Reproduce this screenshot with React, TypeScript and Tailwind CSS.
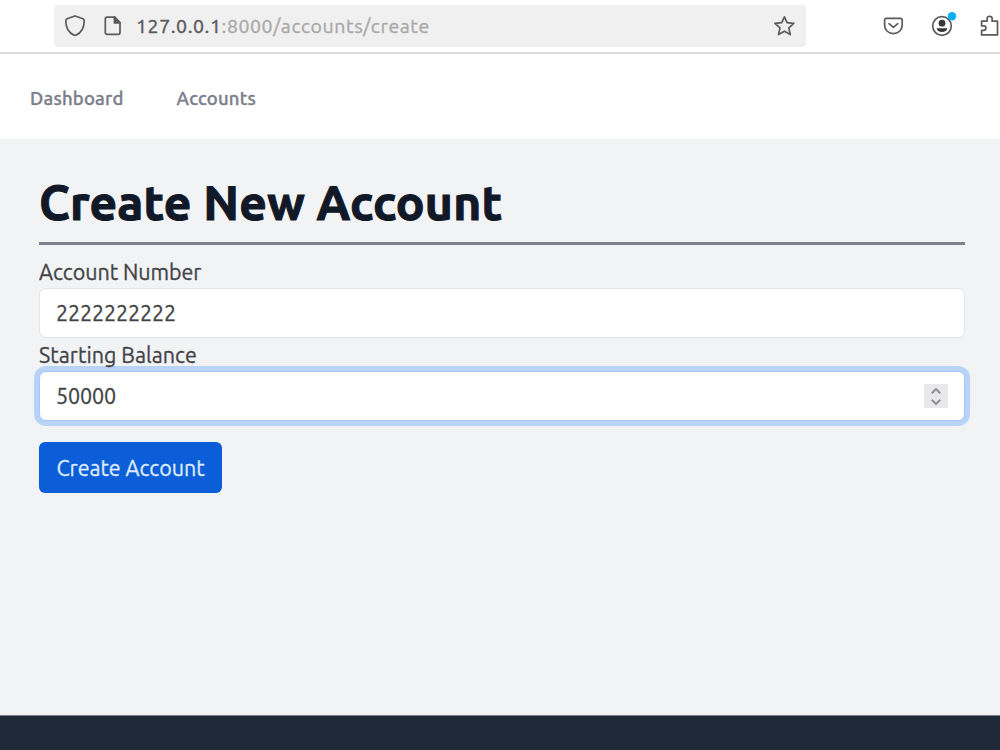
import { useState, type ReactNode } from 'react';

const FONT = "font-['Ubuntu','Noto_Sans',sans-serif]";
const LABEL_TEXT = 'text-[21.5px] text-[#424347] [-webkit-text-stroke:0.3px_#424347]';
const FIELD_TEXT = 'text-[21.5px] tracking-[-0.13px] text-[#424347] [-webkit-text-stroke:0.3px_#424347]';

const NAV_LINKS = [
  { label: 'Dashboard', href: '#dashboard' },
  { label: 'Accounts',  href: '#accounts'  },
];

function ToolbarIcon({ children }: { children: ReactNode }) {
  return (
    <svg
      viewBox="0 0 24 24"
      className="h-6 w-6 flex-shrink-0 overflow-visible"
      fill="none"
      stroke="#5b5b5d"
      strokeWidth="1.7"
      strokeLinecap="round"
      strokeLinejoin="round"
    >
      {children}
    </svg>
  );
}

function BrowserBar() {
  return (
    <div className="flex h-[54px] items-start overflow-hidden border-b-2 border-[#dcdcdc] bg-white pt-[5px] pl-[54px]">
      <div className="flex h-[42px] w-[752px] flex-shrink-0 items-center rounded-[4px] bg-[#f0f0f0] px-[9px]">
        {/* Shield */}
        <ToolbarIcon>
          <path d="M11.1 2.2Q12 1.7 12.9 2.2L19.9 4.7Q21.2 5.2 21.2 6.7C21.2 13.5 18 18.9 13 21.1Q12 21.6 11 21.1C6 18.9 2.8 13.5 2.8 6.7Q2.8 5.2 4.1 4.7Z" />
        </ToolbarIcon>
        {/* Page */}
        <div className="ml-[14px] flex">
          <ToolbarIcon>
            <path d="M6.1 3.2H13.8L19 8.6V18.6Q19 20.4 17.2 20.4H6.1Q4.3 20.4 4.3 18.6V5Q4.3 3.2 6.1 3.2Z" />
            <path d="M13.4 3.2V8.8H19Z" fill="#5b5b5d" />
          </ToolbarIcon>
        </div>
        <p className="ml-[11px] flex-1 text-[19.5px] leading-[42px] tracking-[0.57px] whitespace-nowrap text-[#a9a9a9] [-webkit-text-stroke:0.35px_#a9a9a9]">
          <span className="text-[#5b5b5d] [-webkit-text-stroke:0.45px_#5b5b5d]">127.0.0.1</span>:8000/accounts/create
        </p>
        {/* Bookmark star */}
        <ToolbarIcon>
          <path d="M11.4 2.8 14.1 8.7 20.9 9.4 15.8 13.9 17.3 20.6 11.4 17.2 5.5 20.6 7 13.9 1.9 9.4 8.7 8.7Z" />
        </ToolbarIcon>
      </div>
      <div className="ml-[75px] flex h-[42px] flex-shrink-0 items-center gap-[25px]">
        {/* Pocket */}
        <ToolbarIcon>
          <path d="M5.4 4.3H19.4Q21.2 4.3 21.2 6.1V11C21.2 16.2 17.2 19.6 12.4 19.6 7.6 19.6 3.6 16.2 3.6 11V6.1Q3.6 4.3 5.4 4.3Z" />
          <path d="M8 9.7 12.4 13.4 16.8 9.7" />
        </ToolbarIcon>
        {/* Profile */}
        <ToolbarIcon>
          <circle cx="12" cy="12" r="9.3" />
          <circle cx="12" cy="9.2" r="3.4" fill="#38383a" stroke="none" />
          <path d="M6.6 14.2H17.4C17 16.7 15 18 12 18S7 16.7 6.6 14.2Z" fill="#38383a" stroke="none" />
          <circle cx="22" cy="2.3" r="4.2" fill="#0caef8" stroke="none" />
        </ToolbarIcon>
        {/* Extensions */}
        <ToolbarIcon>
          <path d="M2.6 7.2H8.1V4.3Q8.1 2.3 10.6 2.3T13.1 4.3V7.2H18.5V20.9H2.6V16.4H4.7Q6.9 16.4 6.9 14.1T4.7 11.8H2.6Z" />
        </ToolbarIcon>
      </div>
    </div>
  );
}

function Stepper({ onStep }: { onStep: (by: number) => void }) {
  return (
    <div className="flex h-6 w-6 flex-col items-center justify-center gap-[5px] bg-[#e9e9ec]">
      <button type="button" aria-label="Increase" onClick={() => onStep(1)}>
        <svg viewBox="0 0 10 6" className="h-[6px] w-[10px]" fill="none" stroke="#8b8b91" strokeWidth="1.9">
          <path d="M0.7 5.3 5 1.1 9.3 5.3" />
        </svg>
      </button>
      <button type="button" aria-label="Decrease" onClick={() => onStep(-1)}>
        <svg viewBox="0 0 10 6" className="h-[6px] w-[10px]" fill="none" stroke="#8b8b91" strokeWidth="1.9">
          <path d="M0.7 0.7 5 4.9 9.3 0.7" />
        </svg>
      </button>
    </div>
  );
}

export default function App() {
  const [number, setNumber] = useState('2222222222');
  const [balance, setBalance] = useState('50000');

  return (
    <div className={`flex h-[750px] w-[1000px] flex-col overflow-hidden bg-[#f2f3f5] ${FONT}`}>
      <BrowserBar />

      <nav className="flex h-[85px] items-center gap-[53px] bg-white pt-[3px] pl-[30px]">
        {NAV_LINKS.map((link) => (
          <a
            key={link.label}
            href={link.href}
            className="text-[18.5px] leading-6 font-medium tracking-[0.2px] text-[#7b808c] [-webkit-text-stroke:0.35px_#7b808c]"
          >
            {link.label}
          </a>
        ))}
      </nav>

      <main className="flex-1 pt-[30px] pr-[35px] pl-[39px]">
        <h1 className="h-[76px] border-b-[3px] border-[#7c818e] text-[48px] leading-[66px] font-bold tracking-[0.22px] whitespace-nowrap text-[#111827] [-webkit-text-stroke:1.1px_#111827]">
          Create New Account
        </h1>

        <form onSubmit={(e) => e.preventDefault()}>
          <label htmlFor="number" className={`block h-[43px] pt-[11px] leading-8 tracking-[-0.05px] ${LABEL_TEXT}`}>
            Account Number
          </label>
          <div className="flex h-[50px] items-center rounded-[7px] border border-[#e2e4e8] bg-white px-4">
            <input
              id="number"
              value={number}
              onChange={(e) => setNumber(e.target.value)}
              className={`w-full outline-none ${FIELD_TEXT}`}
            />
          </div>

          <label htmlFor="balance" className={`block h-[33px] pt-px leading-8 tracking-[0.02px] ${LABEL_TEXT}`}>
            Starting Balance
          </label>
          <div className="flex h-[50px] items-center rounded-[7px] border border-[#a4c8fd] bg-white px-4 ring-[5px] ring-[#b9d3f6]">
            <input
              id="balance"
              value={balance}
              onChange={(e) => setBalance(e.target.value)}
              className={`min-w-0 flex-1 outline-none ${FIELD_TEXT}`}
            />
            <Stepper onStep={(by) => setBalance(String(Number(balance) + by))} />
          </div>

          <button
            type="submit"
            className="mt-[21px] h-[51px] w-[183px] rounded-[6px] bg-[#0b5ed7] text-[21.5px] leading-[50px] tracking-[-0.05px] whitespace-nowrap text-[#dfeafb] [-webkit-text-stroke:0.3px_#dfeafb]"
          >
            Create Account
          </button>
        </form>
      </main>

      <footer className="h-[35px] border-t border-[#7b808a] bg-[#1f2937]" />
    </div>
  );
}
